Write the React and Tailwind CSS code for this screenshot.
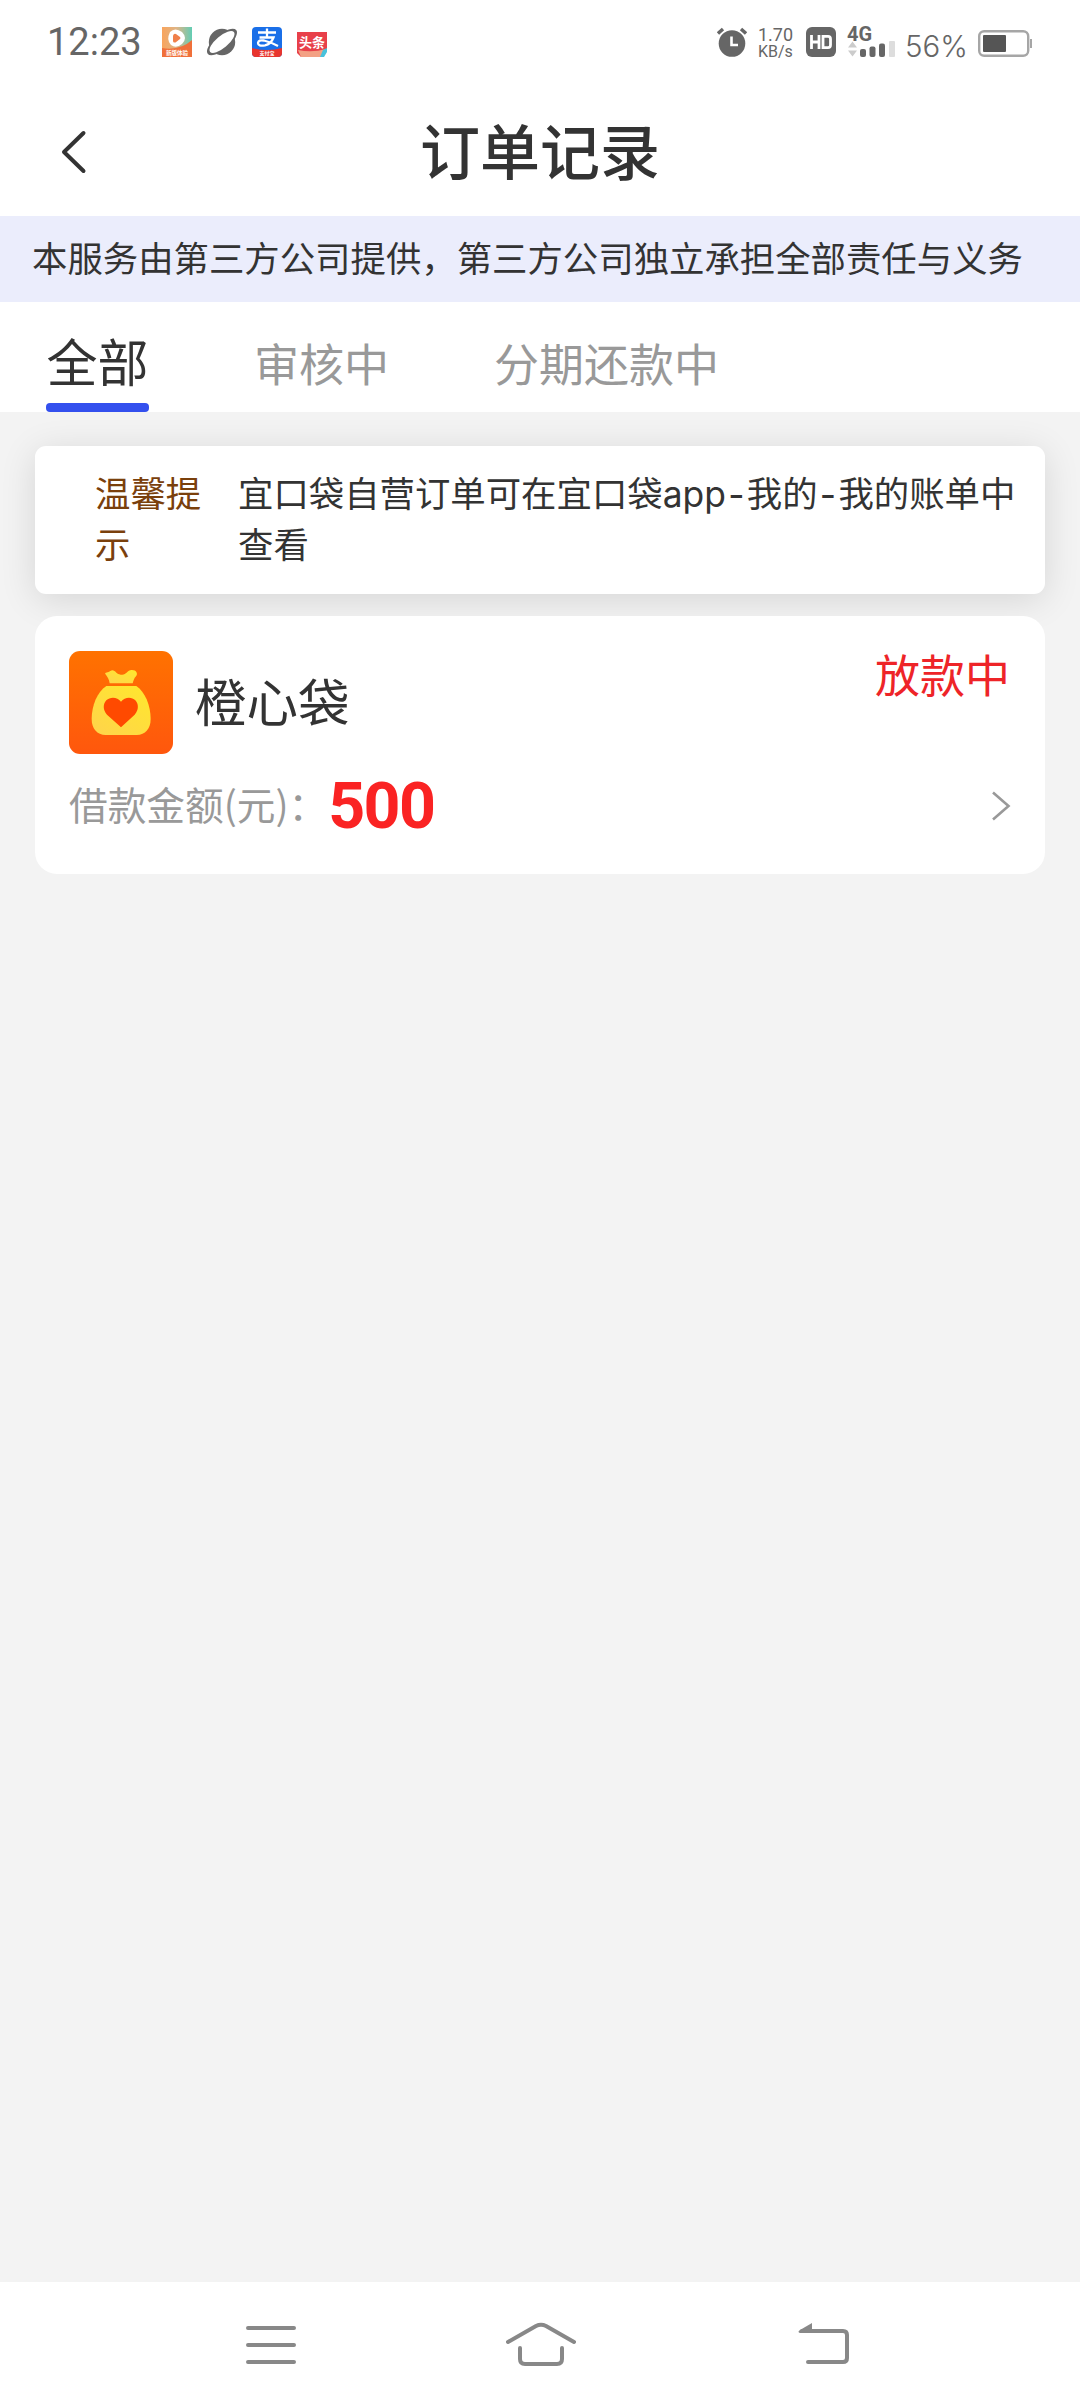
import React from "react";

function StatusBar() {
  return (
    <div className="flex h-[84px] items-start justify-between pl-[47px] pr-[48px] pt-[27px] text-[#666]">
      <div className="flex h-[30px] items-center">
        <span className="w-[115px] whitespace-nowrap font-['Roboto'] text-[38px] leading-[30px] font-normal">12:23</span>
        <svg className="size-[30px]" viewBox="0 0 30 30">
          <defs>
            <linearGradient id="video" x1="0" y1="0" x2="1" y2="0">
              <stop offset="0" stopColor="#f9a45c" />
              <stop offset="0.5" stopColor="#dcb588" />
              <stop offset="1" stopColor="#62cdb4" />
            </linearGradient>
          </defs>
          <rect width="30" height="30" fill="url(#video)" />
          <path d="M0 21Q18 24 30 13V30H0Z" fill="#f0703a" />
          <path d="M8 5Q13 0 20 5Q26 11 20 17Q14 22 9 18Q4 13 8 5Z" fill="#fff" />
          <path d="M11 8.500Q12 6 14 7L18 10Q19 11 18 12L13.500 15.500Q11 16 11 14Z" fill="#f0804a" />
          <text x="15" y="27.500" fontSize="5.500" fontWeight="700" textAnchor="middle" fill="#fff" fontFamily="Noto Sans CJK SC, sans-serif">新版体验</text>
        </svg>
        <svg className="ml-[15px] size-[30px] overflow-visible" viewBox="0 0 30 30">
          <circle cx="15" cy="15" r="13.2" fill="#666" />
          <ellipse cx="15" cy="15" rx="18.500" ry="7.500" transform="rotate(-40 15 15)" fill="#666" />
          <ellipse cx="15" cy="15" rx="15.500" ry="6" transform="rotate(-40 15 15)" fill="#fff" />
        </svg>
        <svg className="ml-[15px] size-[30px]" viewBox="0 0 30 30">
          <defs><clipPath id="pay"><rect width="30" height="30" rx="4" /></clipPath></defs>
          <g clipPath="url(#pay)">
            <rect width="30" height="30" fill="#1a6fe8" />
            <path d="M0 21Q15 25 30 21V30H0Z" fill="#e8352e" />
            <path d="M6 5.500H24M15 1.500V10M7.500 10.500H21.500Q19 17 13 18.300Q6 19.500 6 16Q6.500 12.500 12 13.500Q18 15 26 19" fill="none" stroke="#fff" strokeWidth="2.300" />
            <text x="15" y="28" fontSize="5" fontWeight="700" textAnchor="middle" fill="#fff" fontFamily="Noto Sans CJK SC, sans-serif">支付宝</text>
          </g>
        </svg>
        <svg className="ml-[15px] mt-[5px] h-[25px] w-[30px]" viewBox="0 0 30 25">
          <path d="M0 0H30V19L26 25H4L0 21Z" fill="#e8404a" />
          <path d="M1 18Q15 21 29 17L26 25H4Z" fill="#f3a184" />
          <path d="M23 25L26 18L30 16V20L27 25Z" fill="#48c2dc" />
          <text x="15" y="14.500" fontSize="13" fontWeight="700" textAnchor="middle" fill="#fff" fontFamily="Noto Sans CJK SC, sans-serif">头条</text>
        </svg>
      </div>
      <div className="flex h-[30px] items-start">
        <svg className="h-[30px] w-[30px]" viewBox="0 0 30 30">
          <circle cx="15" cy="16.5" r="13.3" fill="#666" />
          <path d="M1 6.500L6 2M29 6.500L24 2" stroke="#666" strokeWidth="3.400" />
          <path d="M14.500 9.500V18H21" stroke="#fff" strokeWidth="2.600" fill="none" />
        </svg>
        <div className="ml-[11px] flex w-[36px] flex-col font-['Roboto'] text-[18px] leading-[16.500px]">
          <span className="whitespace-nowrap">1.70</span>
          <span className="whitespace-nowrap text-[16px]">KB/s</span>
        </div>
        <svg className="ml-[12px] size-[30px]" viewBox="0 0 30 30">
          <rect width="30" height="30" rx="6" fill="#666" />
          <path d="M5.500 8V22M13 8V22M5.500 15H13M17 9.300H22Q24.500 9.300 24.500 12V18Q24.500 20.700 22 20.700H17Z" stroke="#fff" strokeWidth="2.800" fill="none" />
        </svg>
        <div className="relative ml-[12px] h-[30px] w-[48px]">
          <svg className="h-[30px] w-[48px]" viewBox="0 0 48 30">
            <path d="M0 20.500L4.500 14.500L9 20.500ZM0 23.500L4.500 29.500L9 23.500Z" fill="#ccc" />
            <rect x="12" y="22" width="6" height="8" rx="2" fill="#666" />
            <rect x="21.500" y="19.500" width="6" height="10.500" rx="2" fill="#666" />
            <rect x="31" y="16.500" width="6" height="13.500" rx="2" fill="#666" />
            <rect x="41" y="14" width="6" height="16" rx="1" fill="#ddd" />
          </svg>
          <span className="absolute -left-px top-0 font-['Roboto'] text-[20px] leading-[15px] font-bold">4G</span>
        </div>
        <span className="ml-[9px] mt-[4px] w-[63px] whitespace-nowrap font-['Inter'] text-[29.500px] leading-[30px] font-light">56%</span>
        <svg className="ml-[10px] mt-[3px] h-[27px] w-[54px]" viewBox="0 0 54 27">
          <rect x="1.200" y="1.200" width="49" height="24.600" rx="5" fill="none" stroke="#a6a6a6" strokeWidth="2.400" />
          <rect x="5" y="5" width="23" height="17" rx="1" fill="#555" />
          <rect x="52" y="9" width="2" height="9" fill="#a6a6a6" />
        </svg>
      </div>
    </div>
  );
}

function Logo() {
  return (
    <svg className="h-[103px] w-[104px]" viewBox="0 0 312 309">
      <defs>
        <linearGradient id="orange" x1="0" y1="0" x2="0" y2="1">
          <stop offset="0" stopColor="#ff7200" />
          <stop offset="1" stopColor="#ff570d" />
        </linearGradient>
        <linearGradient id="gold" x1="1" y1="0" x2="0.2" y2="1">
          <stop offset="0" stopColor="#ffe82c" />
          <stop offset="1" stopColor="#ffd549" />
        </linearGradient>
      </defs>
      <rect width="312" height="309" rx="33" fill="url(#orange)" />
      <path d="M109 69C106 64 118 65 124 60C138 52 141 72 156 71C172 74 174 56 189 57C202 57 208 68 201 76C195 82 193 90 191 97H122C120 84 116 79 109 69Z" fill="url(#gold)" />
      <path d="M112 105H202C228 122 245 164 245 204C245 233 229 252 203 252H110C84 252 68 233 68 204C68 164 85 122 112 105Z" fill="url(#gold)" />
      <path d="M156 229L114 191C101 177 102 158 112 148C124 137 145 138 156 152C167 138 188 137 199 148C209 158 210 177 197 191Z" fill="#ff4a00" />
    </svg>
  );
}

export default function App() {
  return (
    <div className="flex h-[2408px] w-[1080px] flex-col overflow-hidden bg-[#f3f3f3] font-['Noto_Sans_CJK_SC',sans-serif] text-[#333]">
      <header className="relative z-10 bg-white">
        <StatusBar />
        <div className="grid h-[132px] grid-cols-[200px_1fr_200px] items-center">
          <svg className="ml-[60px] mt-[3px] h-[44px] w-[28px]" viewBox="0 0 28 44">
            <path d="M23.500 3L4 22L23.500 41" fill="none" stroke="#333" strokeWidth="4" strokeLinecap="round" strokeLinejoin="round" />
          </svg>
          <h1 className="-mt-[2px] text-center text-[60px] leading-[80px] font-medium">订单记录</h1>
        </div>
        <p className="flex h-[86px] items-center whitespace-nowrap bg-[#ebedfc] pb-[5px] pl-[32px] text-[35.400px] leading-[50px]">
          本服务由第三方公司提供，第三方公司独立承担全部责任与义务
        </p>
        <nav className="flex h-[110px] gap-[105px] pl-[46px] text-[45px] text-[#999]">
          <div className="flex w-[103px] flex-col items-center justify-between text-[51px] text-[#333]">
            <span className="mt-[22px] leading-[72px]">全部</span>
            <span className="h-[9px] w-full rounded-[4px] bg-[#3450ee]" />
          </div>
          <span className="mt-[25px] leading-[72px]">审核中</span>
          <span className="mt-[25px] leading-[72px]">分期还款中</span>
        </nav>
      </header>

      <main className="flex flex-1 flex-col gap-[22px] px-[35px] pt-[34px]">
        <section className="flex h-[148px] rounded-[11px] bg-white pl-[60px] pt-[22px] text-[35.400px] leading-[51px] shadow-[0_6px_36px_rgba(0,0,0,0.12)]">
          <p className="-mt-[2px] w-[143px] text-[#7a400c]">温馨提<br />示</p>
          <p className="mt-px whitespace-nowrap font-['Inter','Noto_Sans_CJK_SC',sans-serif]">
            宜口袋自营订单可在宜口袋app<span className="px-[2.300px]">-</span>我的<span className="px-[2.300px]">-</span>我的账单中<br />查看
          </p>
        </section>

        <section className="flex h-[258px] flex-col rounded-[22px] bg-white pl-[34px] pr-[35px] pt-[35px]">
          <div className="flex h-[103px] items-start">
            <Logo />
            <h2 className="ml-[22px] mt-[12px] text-[51.500px] leading-[74px]">橙心袋</h2>
            <span className="-mt-[3px] ml-auto text-[45px] leading-[52px] text-[#ee2428]">放款中</span>
          </div>
          <div className="flex h-[104px] items-center">
            <span className="-mt-[5px] whitespace-nowrap text-[38.700px] text-[#999]">借款金额(元)：</span>
            <span className="ml-px font-['Roboto'] text-[64.500px] leading-[65px] font-bold tracking-[-1.700px] text-[#fa2323]">500</span>
            <svg className="-mr-px ml-auto h-[30px] w-[20px]" viewBox="0 0 20 30">
              <path d="M2 1.500L17.500 15L2 28.500" fill="none" stroke="#999" strokeWidth="2.600" />
            </svg>
          </div>
        </section>
      </main>

      <footer className="flex h-[126px] items-start bg-white pl-[246px] pt-[38px]">
        <svg className="h-[50px] w-[50px]" viewBox="0 0 50 50">
          <path d="M2 8H48M2 25H48M2 42H48" stroke="#888" strokeWidth="4" strokeLinecap="round" />
        </svg>
        <svg className="ml-[210px] h-[50px] w-[70px]" viewBox="0 0 70 50">
          <path d="M2 22L30 6Q35 3.500 40 6L68 22M14 28V39Q14 44 19 44H51Q56 44 56 39V28" fill="none" stroke="#888" strokeWidth="4" strokeLinecap="round" strokeLinejoin="round" />
        </svg>
        <svg className="ml-[220px] h-[50px] w-[60px]" viewBox="0 0 60 50">
          <path d="M6 11H47Q51 11 51 15V38Q51 42 47 42H12" fill="none" stroke="#888" strokeWidth="4" strokeLinecap="round" />
          <path d="M4 10L16 3V13H4Q1 12 4 10Z" fill="#888" />
        </svg>
      </footer>
    </div>
  );
}
